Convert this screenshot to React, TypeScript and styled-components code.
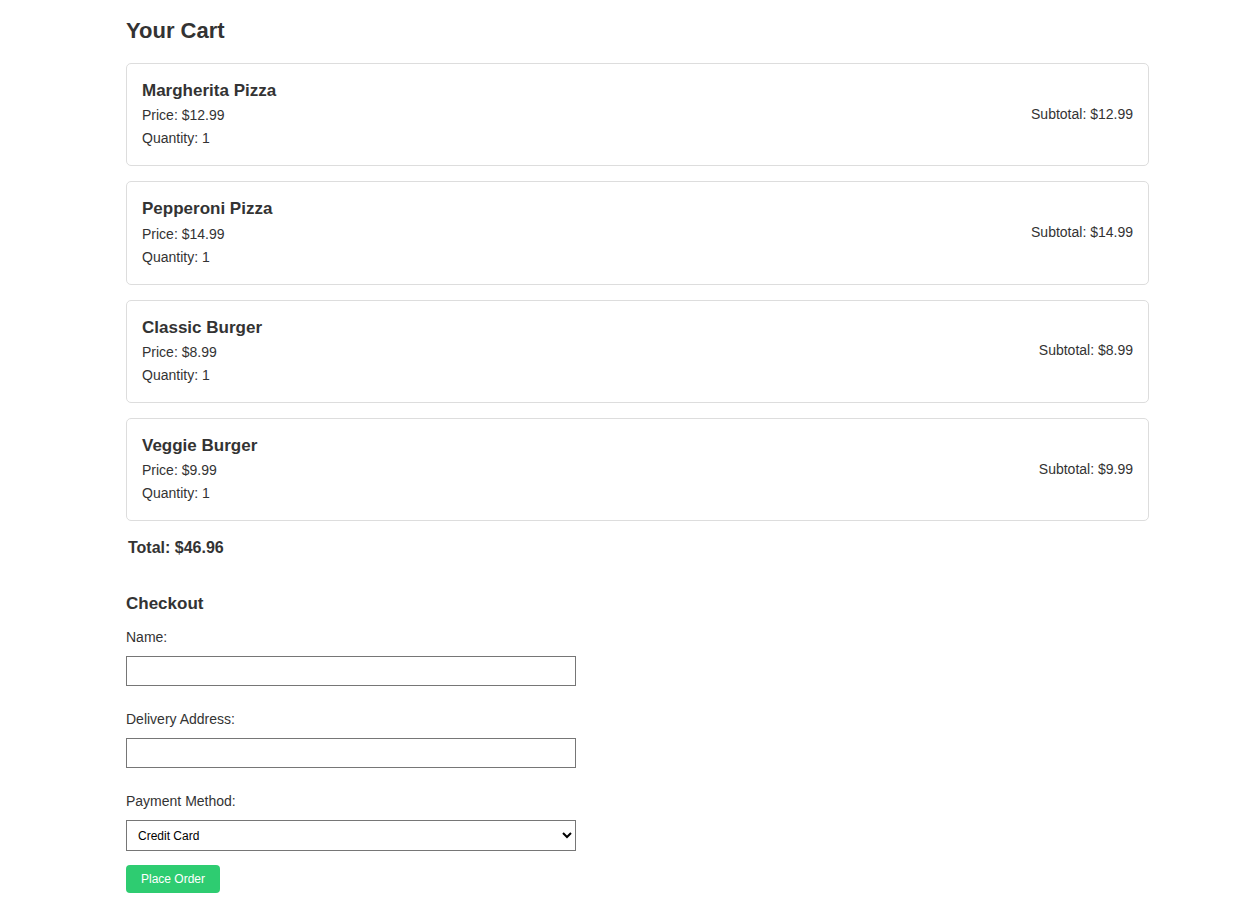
import React from "react";
import styled, { createGlobalStyle } from "styled-components";

const GlobalStyle = createGlobalStyle`
  html, body {
    margin: 0;
    padding: 0;
    background: #ffffff;
  }
  body {
    font-family: "Liberation Sans", Arial, sans-serif;
    color: #333333;
  }
`;

const Page = styled.div`
  width: 1023px;
  margin-left: 126px;
  padding-bottom: 29px;
`;

const Title = styled.h2`
  margin: 18px 0 19px;
  font-size: 22px;
  line-height: 26px;
  font-weight: 700;
  color: #333333;
`;

const CartList = styled.div`
  display: flex;
  flex-direction: column;
  gap: 15px;
`;

const Card = styled.div`
  display: flex;
  justify-content: space-between;
  align-items: center;
  border: 1px solid #dddddd;
  border-radius: 5px;
  padding: 17px 15px 15px;
`;

const ItemInfo = styled.div`
  display: flex;
  flex-direction: column;
`;

const ItemName = styled.h3`
  margin: 0 0 3.3px;
  font-size: 17px;
  line-height: 20px;
  font-weight: 700;
  color: #333333;
`;

const ItemLine = styled.p`
  margin: 0;
  font-size: 14px;
  line-height: 23px;
  color: #333333;
`;

const Subtotal = styled.p`
  margin: 0 0 4px;
  font-size: 14px;
  line-height: 20px;
  color: #333333;
`;

const Total = styled.h3`
  margin: 17px 0 36px 2px;
  font-size: 16px;
  line-height: 20px;
  font-weight: 700;
  color: #333333;
`;

const CheckoutTitle = styled.h3`
  margin: 0 0 15px;
  font-size: 17px;
  line-height: 20px;
  font-weight: 700;
  color: #333333;
`;

const Form = styled.form`
  display: flex;
  flex-direction: column;
  align-items: flex-start;
`;

const Field = styled.div<{ $last?: boolean }>`
  display: flex;
  flex-direction: column;
  margin-bottom: ${(p) => (p.$last ? "14px" : "25px")};
`;

const Label = styled.label`
  display: block;
  margin-bottom: 11px;
  font-size: 14px;
  line-height: 16px;
  color: #333333;
`;

const TextInput = styled.input`
  box-sizing: border-box;
  width: 450px;
  height: 30px;
  margin: 0;
  padding: 0 8px;
  border: 1px solid #767676;
  border-radius: 0;
  font-family: "Liberation Sans", Arial, sans-serif;
  font-size: 13px;
  outline: none;
`;

const Select = styled.select`
  box-sizing: border-box;
  width: 450px;
  height: 31px;
  margin: 0;
  padding: 0 0 0 7px;
  border: 1px solid #767676;
  border-radius: 0;
  background: #ffffff;
  color: #000000;
  font-family: "Liberation Sans", Arial, sans-serif;
  font-size: 12px;
`;

const OrderButton = styled.button`
  box-sizing: border-box;
  height: 28px;
  padding: 0 15px;
  border: none;
  border-radius: 4px;
  background: #2ecc71;
  color: #ffffff;
  font-family: "Liberation Sans", Arial, sans-serif;
  font-size: 12px;
  cursor: pointer;
`;

const items = [
  { name: "Margherita Pizza", price: 12.99, qty: 1 },
  { name: "Pepperoni Pizza", price: 14.99, qty: 1 },
  { name: "Classic Burger", price: 8.99, qty: 1 },
  { name: "Veggie Burger", price: 9.99, qty: 1 },
];

export default function App() {
  const total = items.reduce((s, i) => s + i.price * i.qty, 0);
  return (
    <>
      <GlobalStyle />
      <Page>
        <Title>Your Cart</Title>
        <CartList>
          {items.map((item) => (
            <Card key={item.name}>
              <ItemInfo>
                <ItemName>{item.name}</ItemName>
                <ItemLine>Price: ${item.price.toFixed(2)}</ItemLine>
                <ItemLine>Quantity: {item.qty}</ItemLine>
              </ItemInfo>
              <Subtotal>Subtotal: ${(item.price * item.qty).toFixed(2)}</Subtotal>
            </Card>
          ))}
        </CartList>
        <Total>Total: ${total.toFixed(2)}</Total>
        <CheckoutTitle>Checkout</CheckoutTitle>
        <Form onSubmit={(e) => e.preventDefault()}>
          <Field>
            <Label htmlFor="name">Name:</Label>
            <TextInput id="name" type="text" />
          </Field>
          <Field>
            <Label htmlFor="address">Delivery Address:</Label>
            <TextInput id="address" type="text" />
          </Field>
          <Field $last>
            <Label htmlFor="payment">Payment Method:</Label>
            <Select id="payment" defaultValue="credit">
              <option value="credit">Credit Card</option>
              <option value="cash">Cash on Delivery</option>
              <option value="paypal">PayPal</option>
            </Select>
          </Field>
          <OrderButton type="submit">Place Order</OrderButton>
        </Form>
      </Page>
    </>
  );
}
